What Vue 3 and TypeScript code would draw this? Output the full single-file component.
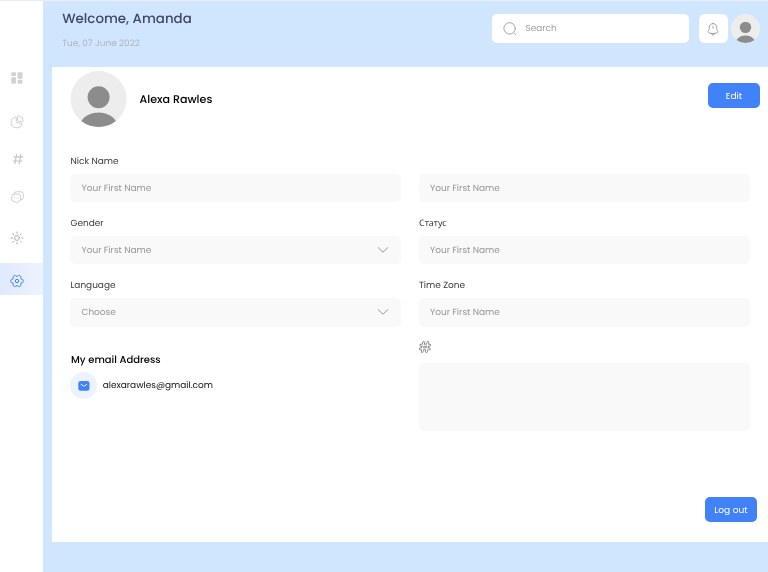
<script setup lang="ts">
import { ref } from 'vue'

interface Field {
  label: string
  placeholder: string
  select?: boolean
  cyrillic?: boolean
}

const leftFields = ref<Field[]>([
  { label: 'Nick Name', placeholder: 'Your First Name' },
  { label: 'Gender', placeholder: 'Your First Name', select: true },
  { label: 'Language', placeholder: 'Choose', select: true },
])
const rightFields = ref<Field[]>([
  { label: '', placeholder: 'Your First Name' },
  { label: 'Статус', placeholder: 'Your First Name', cyrillic: true },
  { label: 'Time Zone', placeholder: 'Your First Name' },
])
</script>

<template>
  <div class="app">
    <aside class="sidebar">
      <a class="nav dash">
        <svg width="12" height="12" viewBox="0 0 12 12" fill="#d2d2d2">
          <rect x="0.3" y="0.3" width="4.8" height="3.8" rx="1" />
          <rect x="0.3" y="5.2" width="4.8" height="6.5" rx="1" />
          <rect x="6.5" y="0.3" width="5" height="6.4" rx="1" />
          <rect x="6.5" y="7.8" width="5" height="3.9" rx="1" />
        </svg>
      </a>
      <a class="nav pie">
        <svg width="14" height="14" viewBox="0 0 14 14" fill="none" stroke="#cbcbcb" stroke-width="0.9" stroke-linejoin="round">
          <path d="M5.6 2.1A5.4 5.4 0 1 0 11.8 8.6Q11.8 8 11 8H7.4Q6.3 8 6.3 6.9V2.9Q6.3 2 5.6 2.1Z" />
          <path d="M7.6 1.4Q7.6 .6 8.4 .7A5.6 5.6 0 0 1 13.3 5.5Q13.4 6.3 12.6 6.3H8.5Q7.6 6.3 7.6 5.4Z" />
        </svg>
      </a>
      <a class="nav hash">
        <svg width="12" height="12" viewBox="0 0 12 12" fill="none" stroke="#c4c4c4" stroke-width="1.1">
          <path d="M4.6 .8 2.9 11.2M8.9 .8 7.2 11.2M1.5 3.9H11.2M.8 8H10.5" />
        </svg>
      </a>
      <a class="nav chat">
        <svg width="13" height="13" viewBox="0 0 13 13" fill="none" stroke="#cacaca" stroke-width="0.9" stroke-linejoin="round">
          <path d="M3.2 3.1V2.7Q3.2 .8 5.4 .8H10Q12.3 .8 12.3 3.1V6.4Q12.3 8.8 9.7 9" />
          <path d="M3.1 3.1H7.3Q9.6 3.1 9.6 5.4V8.2Q9.6 10.5 7.3 10.5H6.9L5.2 12.1 3.7 10.5H3Q.7 10.5 .7 8.2V5.4Q.7 3.1 3.1 3.1Z" />
          <path d="M2.9 7H3.7M4.8 7H5.6M6.7 7H7.5" />
        </svg>
      </a>
      <a class="nav sun">
        <svg width="14" height="14" viewBox="0 0 14 14" fill="none" stroke="#b0b0b0" stroke-width="1" stroke-linecap="round">
          <circle cx="7" cy="7" r="2.4" />
          <path d="M7 1V2.5M7 11.5V13M1 7H2.5M11.5 7H13M2.8 2.8 3.8 3.8M10.2 10.2 11.2 11.2M2.8 11.2 3.8 10.2M10.2 3.8 11.2 2.8" />
        </svg>
      </a>
      <a class="nav settings active">
        <svg width="14" height="14" viewBox="0 0 14 14" fill="none" stroke="#4182f9" stroke-width="1" stroke-linejoin="round">
          <circle cx="7" cy="7" r="1.7" />
          <path d="M4.3 1.5Q5 1 5.5 1.7Q7 3.1 8.5 1.7Q9 1 9.7 1.5L10.5 2Q11.2 2.6 10.7 3.4Q10.3 5.2 12.2 5.3Q13.1 5.5 13.1 6.3V7.7Q13.1 8.5 12.2 8.7Q10.3 8.8 10.7 10.6Q11.2 11.4 10.5 12L9.7 12.5Q9 13 8.5 12.3Q7 10.9 5.5 12.3Q5 13 4.3 12.5L3.5 12Q2.8 11.4 3.3 10.6Q3.7 8.8 1.8 8.7Q.9 8.5 .9 7.7V6.3Q.9 5.5 1.8 5.3Q3.7 5.2 3.3 3.4Q2.8 2.6 3.5 2Z" />
        </svg>
      </a>
    </aside>

    <main class="main">
      <header class="header">
        <div class="greeting">
          <h1>Welcome, Amanda</h1>
          <p>Tue, 07 June 2022</p>
        </div>
        <div class="search">
          <svg width="14" height="14" viewBox="0 0 14 14" fill="none" stroke="#9c9797" stroke-width="0.9" stroke-linecap="round">
            <circle cx="6.6" cy="6.4" r="5.7" />
            <path d="M11.4 11.3 12.6 12.5" />
          </svg>
          <span class="text">Search</span>
        </div>
        <div class="bell">
          <svg width="12" height="14" viewBox="0 0 12 14" fill="none" stroke="#8f8a8a" stroke-width="0.8" stroke-linecap="round" stroke-linejoin="round">
            <path d="M6 1.6C3.8 1.6 2.3 3.2 2.3 5.3V7.1C2.3 7.8 1.5 8.6 1.2 9.2C.8 10 1.2 10.8 2.1 11Q6 12 9.9 11C10.8 10.8 11.2 10 10.8 9.2C10.5 8.6 9.7 7.8 9.7 7.1V5.3C9.7 3.2 8.2 1.6 6 1.6Z" />
            <path d="M6 4.4V6.4M4.4 11.6Q4.7 13 6 13T7.6 11.6" />
          </svg>
        </div>
        <svg width="29" height="29" viewBox="0 0 56 56">
          <circle cx="28" cy="28" r="28" fill="#ededed" />
          <circle cx="28" cy="25.8" r="11" fill="#8c8c8c" />
          <path d="M10.7 50C18 38.5 38 38.5 45.3 50A28 28 0 0 1 10.7 50Z" fill="#8c8c8c" />
        </svg>
      </header>

      <section class="card">
        <div class="profile">
          <svg width="57" height="56" viewBox="0 0 57 56">
            <circle cx="28.6" cy="28" r="28" fill="#ededed" />
            <circle cx="28.6" cy="26.2" r="11" fill="#8c8c8c" />
            <path d="M11.3 50C18.6 38.5 38.6 38.5 45.9 50A28 28 0 0 1 11.3 50Z" fill="#8c8c8c" />
          </svg>
          <h2>Alexa Rawles</h2>
          <button class="btn edit"><span>Edit</span></button>
        </div>

        <div class="form">
          <div class="column">
            <div v-for="(f, i) in leftFields" :key="i" class="field">
              <label><span class="text">{{ f.label }}</span></label>
              <div class="input">
                <span class="text">{{ f.placeholder }}</span>
                <svg v-if="f.select" width="12" height="8" viewBox="0 0 12 8" fill="none" stroke="#969696" stroke-width="1" stroke-linecap="round" stroke-linejoin="round">
                  <path d="M1.2 1.6 6 6.2 10.8 1.6" />
                </svg>
              </div>
            </div>
            <h3>My email Address</h3>
            <div class="mail">
              <div class="mail-icon">
                <svg width="12" height="10" viewBox="0 0 12 10">
                  <rect x="0.3" y="0.1" width="11.2" height="9.7" rx="2.4" fill="#4182f9" />
                  <path d="M3.1 3.4 5.3 4.9Q5.9 5.3 6.5 4.9L8.7 3.4" fill="none" stroke="#fff" stroke-width="0.9" stroke-linecap="round" />
                </svg>
              </div>
              <span class="text">alexarawles@gmail.com</span>
            </div>
          </div>

          <div class="column">
            <div v-for="(f, i) in rightFields" :key="i" class="field">
              <label><span :class="{ text: !f.cyrillic }">{{ f.label }}</span></label>
              <div class="input"><span class="text">{{ f.placeholder }}</span></div>
            </div>
            <div class="field notes">
              <label>
                <svg width="12" height="12" viewBox="0 0 12 12" stroke-linecap="round" fill="none">
                  <path d="M4.6 1.6 3.2 10.4M8.9 1.6 7.5 10.4M1.8 4.1H10.6M1.4 7.9H10.2" stroke="#6b7076" stroke-width="2.6" />
                  <path d="M4.6 1.6 3.2 10.4M8.9 1.6 7.5 10.4M1.8 4.1H10.6M1.4 7.9H10.2" stroke="#fff" stroke-width="1.2" />
                </svg>
              </label>
              <div class="textarea"></div>
            </div>
          </div>
        </div>

        <footer class="footer">
          <button class="btn"><span>Log out</span></button>
        </footer>
      </section>
    </main>
  </div>
</template>

<style>
body {
  margin: 0;
  overflow: hidden;
}
</style>

<style scoped>
* {
  box-sizing: border-box;
}
.app {
  display: flex;
  width: 768px;
  height: 572px;
  border-top: 1px solid #e9edf3;
  font-family: Poppins, 'Noto Sans', sans-serif;
  font-size: 8.95px;
  text-rendering: geometricPrecision;
  will-change: transform;
  color: #333;
  white-space: nowrap;
}
h1, h2, h3, p {
  margin: 0;
}
svg {
  display: block;
  flex: none;
}
.text {
  padding-top: 2.5px;
}
.sidebar {
  width: 43.3px;
  flex: none;
  padding-top: 61px;
}
.nav {
  display: flex;
  align-items: center;
  justify-content: center;
  height: 32px;
  padding-right: 9px;
}
.dash { padding-right: 8.4px; }
.pie { margin-top: 11.5px; }
.hash { margin-top: 5.5px; padding-right: 8px; }
.chat { margin-top: 6px; }
.sun { margin-top: 9px; }
.settings {
  margin-top: 8.5px;
  padding-top: 4px;
}
.active {
  background: linear-gradient(90deg, #e0eafe, #edf3ff);
}
.main {
  flex: 1;
  min-width: 0;
  display: flex;
  flex-direction: column;
  background: #d0e6ff;
  padding: 0 0 30.5px 9.2px;
}
.header {
  height: 66px;
  flex: none;
  display: flex;
  align-items: flex-start;
  padding: 13px 8px 0 9.7px;
}
.greeting {
  flex: 1;
  margin-top: -6px;
}
h1 {
  font-size: 13.4px;
  line-height: 22px;
  font-weight: 500;
  color: #414668;
}
.greeting p {
  margin-top: 6px;
  line-height: 16px;
  font-size: 8.9px;
  color: #b0b5bd;
}
.search {
  display: flex;
  align-items: center;
  gap: 8.5px;
  width: 197.6px;
  height: 29px;
  padding-left: 11.3px;
  border-radius: 5px;
  background: #fff;
  color: #a09d9d;
}
.bell {
  display: flex;
  align-items: center;
  justify-content: center;
  width: 29px;
  height: 29px;
  margin: 0 3.5px 0 9.3px;
  border-radius: 6px;
  background: #fff;
}
.card {
  flex: 1;
  display: flex;
  flex-direction: column;
  background: #fff;
  padding: 4px 8px 20px 18px;
}
.profile {
  display: flex;
  height: 56px;
}
h2 {
  flex: 1;
  margin-left: 12px;
  line-height: 56px;
  font-size: 11.1px;
  font-weight: 500;
  color: #000;
}
.btn {
  display: flex;
  align-items: center;
  justify-content: center;
  width: 52px;
  height: 25px;
  padding: 1px 0 0;
  border: 0;
  border-radius: 5px;
  background: #4182f9;
  color: #fff;
  font: inherit;
  font-size: 9.1px;
}
.edit {
  margin-top: 11.5px;
}
.form {
  display: grid;
  grid-template-columns: 331px 331px;
  column-gap: 17.5px;
  margin-top: 25px;
}
.field {
  margin-bottom: 12px;
}
label {
  display: flex;
  align-items: center;
  height: 18px;
  margin-bottom: 4px;
  color: #3a3a3a;
}
.input {
  display: flex;
  align-items: center;
  justify-content: space-between;
  height: 28.2px;
  padding: 0 12px 0 11px;
  border-radius: 5px;
  background: #f9f9f9;
  color: #969696;
}
.notes label {
  height: 17px;
  margin-bottom: 7px;
}
.textarea {
  height: 68.6px;
  border-radius: 5px;
  background: #f9f9f9;
}
h3 {
  margin-top: 24px;
  padding-left: 0.5px;
  line-height: 18px;
  font-size: 10px;
  font-weight: 500;
  color: #000;
}
.mail {
  display: flex;
  align-items: center;
  gap: 5.2px;
  margin-top: 3.5px;
  color: #111;
}
.mail-icon {
  display: flex;
  align-items: center;
  justify-content: center;
  width: 27px;
  height: 27px;
  border-radius: 50%;
  background: #ecf2fe;
}
.footer {
  display: flex;
  justify-content: flex-end;
  margin-top: auto;
  padding-right: 3px;
}
</style>
